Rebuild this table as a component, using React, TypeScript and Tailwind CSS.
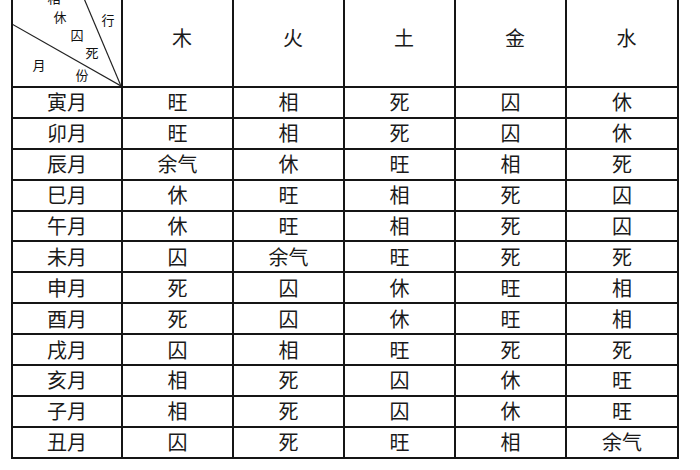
import React from 'react';

const elements = ['木', '火', '土', '金', '水'];

const rows: string[][] = [
  ['寅月', '旺', '相', '死', '囚', '休'],
  ['卯月', '旺', '相', '死', '囚', '休'],
  ['辰月', '余气', '休', '旺', '相', '死'],
  ['巳月', '休', '旺', '相', '死', '囚'],
  ['午月', '休', '旺', '相', '死', '囚'],
  ['未月', '囚', '余气', '旺', '死', '死'],
  ['申月', '死', '囚', '休', '旺', '相'],
  ['酉月', '死', '囚', '休', '旺', '相'],
  ['戌月', '囚', '相', '旺', '死', '死'],
  ['亥月', '相', '死', '囚', '休', '旺'],
  ['子月', '相', '死', '囚', '休', '旺'],
  ['丑月', '囚', '死', '旺', '相', '余气'],
];

// corner labels, centre points relative to the corner cell
const labels = [
  { t: '相', x: 41, y: 8 },
  { t: '休', x: 47, y: 27 },
  { t: '囚', x: 64, y: 45 },
  { t: '死', x: 79, y: 63 },
  { t: '月', x: 26, y: 75 },
  { t: '份', x: 69, y: 85 },
  { t: '行', x: 95, y: 30 },
];

function Corner() {
  return (
    <div className="relative bg-white overflow-hidden">
      <svg className="absolute inset-0" width="108" height="97" viewBox="0 0 108 97">
        <line x1="-1" y1="35" x2="108" y2="97" stroke="#222" strokeWidth="1.2" />
        <line x1="67" y1="0" x2="108" y2="97" stroke="#222" strokeWidth="1.2" />
      </svg>
      {labels.map((l) => (
        <span
          key={l.t}
          className="absolute -translate-x-1/2 -translate-y-1/2 text-[13px] leading-none text-[#111]"
          style={{ left: l.x, top: l.y }}
        >
          {l.t}
        </span>
      ))}
    </div>
  );
}

export default function App() {
  return (
    <div
      className="w-[700px] h-[470px] bg-white overflow-hidden"
      style={{ fontFamily: '"Noto Sans CJK SC", "Noto Sans", sans-serif' }}
    >
      <div className="ml-[11px] -mt-[13px] w-[668px] grid grid-cols-[108px_109px_109px_109px_109px_110px] grid-rows-[97px_repeat(12,28.9px)] gap-[2px] p-[2px] bg-[#151515] text-[#1a1a1a]">
        <Corner />
        {elements.map((e) => (
          <div key={e} className="bg-white flex items-center justify-center pl-[9px] text-[20px] leading-none">
            {e}
          </div>
        ))}
        {rows.map((r) =>
          r.map((c, i) => (
            <div key={r[0] + i} className="bg-white flex items-center justify-center text-[20px] leading-none">
              {c}
            </div>
          ))
        )}
      </div>
    </div>
  );
}
